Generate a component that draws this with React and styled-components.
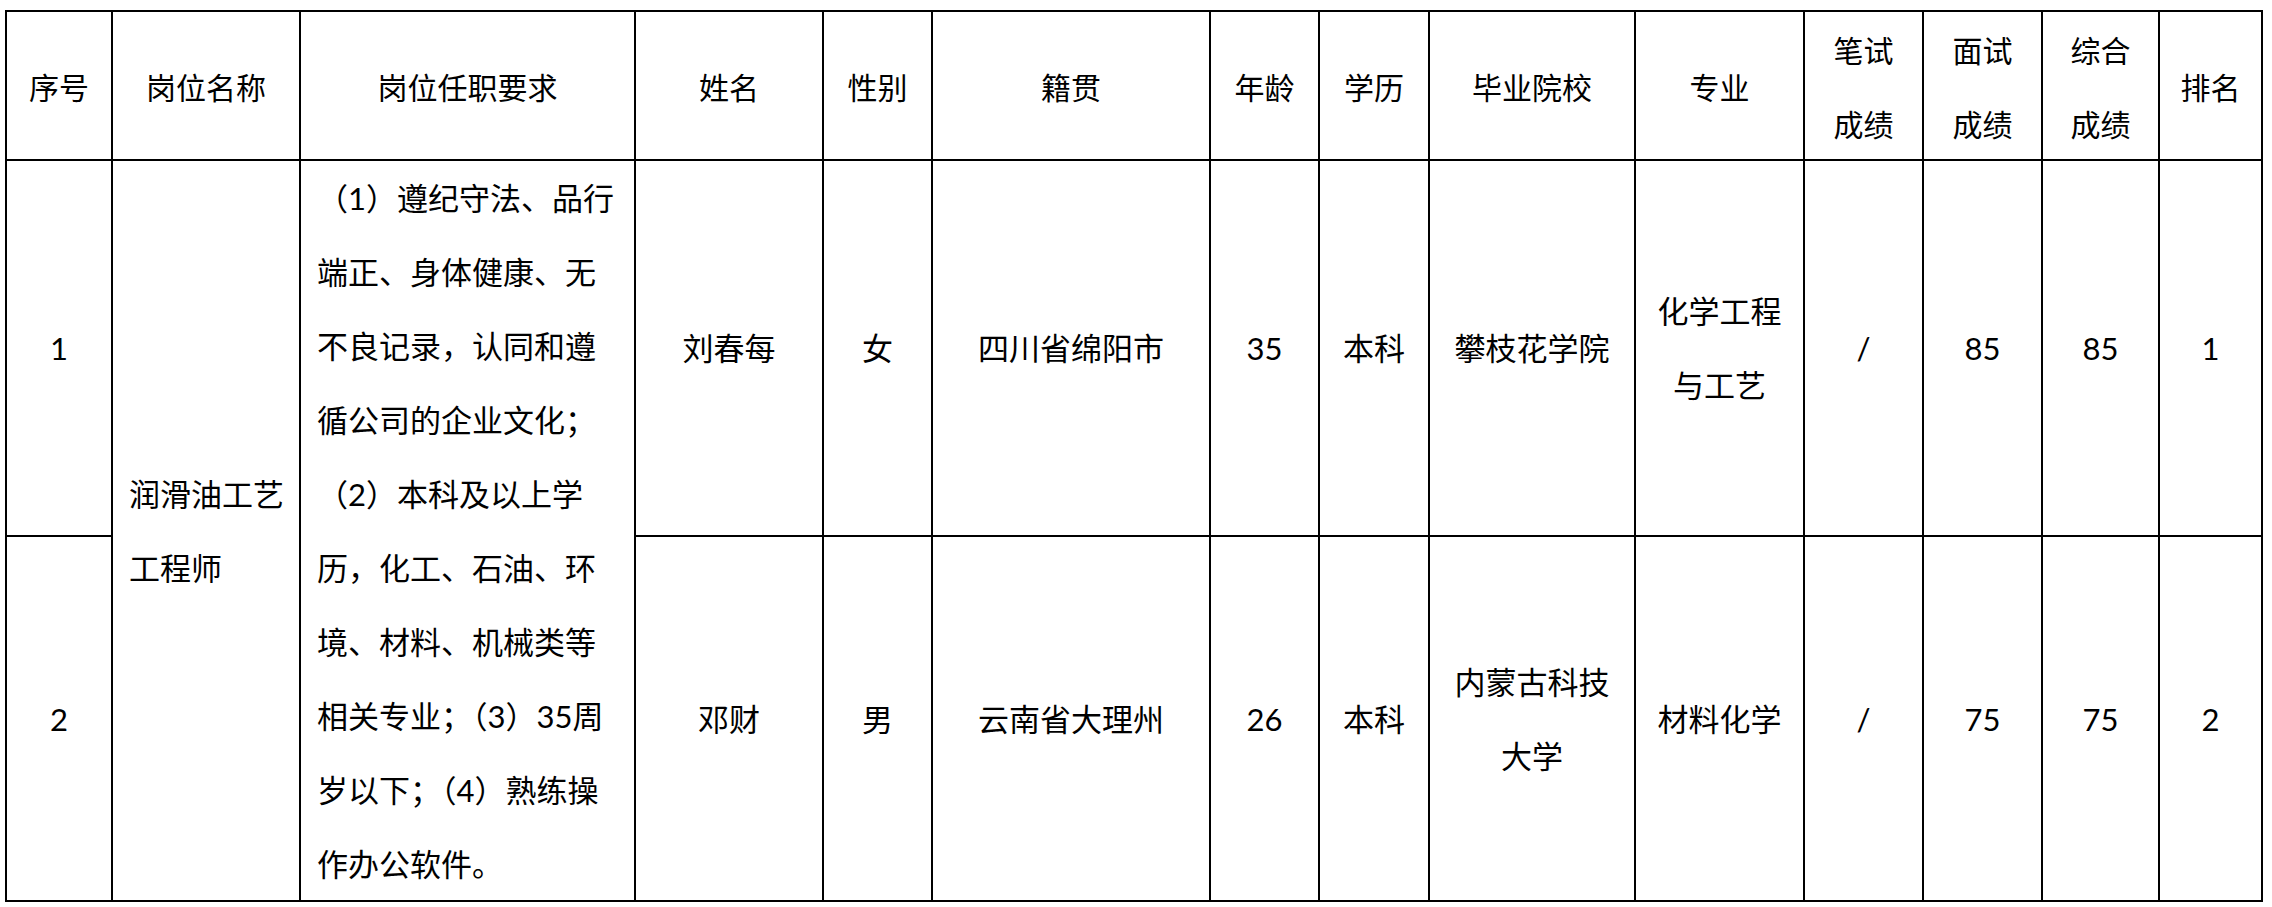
import React from 'react';
import styled, { createGlobalStyle } from 'styled-components';

const GlobalStyle = createGlobalStyle`
	html, body {
		margin: 0;
		padding: 0;
		background: #fff;
	}
	body {
		font-family: Lato, "Noto Sans CJK SC", sans-serif;
		color: #000;
	}
`;

// widths of the cells between the 2px rules
const columns = [104, 186, 333, 186, 107, 276, 107, 108, 204, 167, 117, 117, 115, 101];

const Sheet = styled.div`
	margin: 10px 0 0 5px;
	width: max-content;
	display: grid;
	grid-template-columns: ${columns.map(c => `${c}px`).join(' ')};
	grid-template-rows: 147px 374px 363px;
	gap: 2px;
	padding: 2px;
	background: #000;
`;

const Cell = styled.div`
	background: #fff;
	display: flex;
	flex-direction: column;
	justify-content: center;
	align-items: ${p => (p.$left ? 'flex-start' : 'center')};
	padding-left: ${p => (p.$left ? '16px' : '0')};
	grid-row: ${p => (p.$span ? 'span 2' : 'auto')};
	font-size: 31px;
	line-height: 74px;
	white-space: nowrap;
`;

const HeadCell = styled(Cell)`
	font-family: "Noto Sans CJK SC", serif;
	font-size: 30px;
`;

const Line = styled.span`
	display: block;
`;

const headers = [
	['序号'], ['岗位名称'], ['岗位任职要求'], ['姓名'], ['性别'], ['籍贯'], ['年龄'],
	['学历'], ['毕业院校'], ['专业'], ['笔试', '成绩'], ['面试', '成绩'], ['综合', '成绩'], ['排名']
];

const duties = [
	'（1）遵纪守法、品行',
	'端正、身体健康、无',
	'不良记录，认同和遵',
	'循公司的企业文化；',
	'（2）本科及以上学',
	'历，化工、石油、环',
	'境、材料、机械类等',
	'相关专业；（3）35周',
	'岁以下；（4）熟练操',
	'作办公软件。'
];

const people = [
	{
		no: '1', name: '刘春每', sex: '女', origin: '四川省绵阳市', age: '35', edu: '本科',
		school: ['攀枝花学院'], major: ['化学工程', '与工艺'], written: '/', interview: '85', total: '85', rank: '1'
	},
	{
		no: '2', name: '邓财', sex: '男', origin: '云南省大理州', age: '26', edu: '本科',
		school: ['内蒙古科技', '大学'], major: ['材料化学'], written: '/', interview: '75', total: '75', rank: '2'
	}
];

const Lines = ({items}) => items.map(t => <Line key={t}>{t}</Line>);

const App = () => (
	<>
		<GlobalStyle/>
		<Sheet>
			{headers.map(h => (
				<HeadCell key={h.join('')}><Lines items={h}/></HeadCell>
			))}
			{people.map((p, i) => (
				<React.Fragment key={p.no}>
					<Cell>{p.no}</Cell>
					{i === 0 && (
						<>
							<Cell $span $left><Lines items={['润滑油工艺', '工程师']}/></Cell>
							<Cell $span $left><Lines items={duties}/></Cell>
						</>
					)}
					<Cell>{p.name}</Cell>
					<Cell>{p.sex}</Cell>
					<Cell>{p.origin}</Cell>
					<Cell>{p.age}</Cell>
					<Cell>{p.edu}</Cell>
					<Cell><Lines items={p.school}/></Cell>
					<Cell><Lines items={p.major}/></Cell>
					<Cell>{p.written}</Cell>
					<Cell>{p.interview}</Cell>
					<Cell>{p.total}</Cell>
					<Cell>{p.rank}</Cell>
				</React.Fragment>
			))}
		</Sheet>
	</>
);

export default App;
